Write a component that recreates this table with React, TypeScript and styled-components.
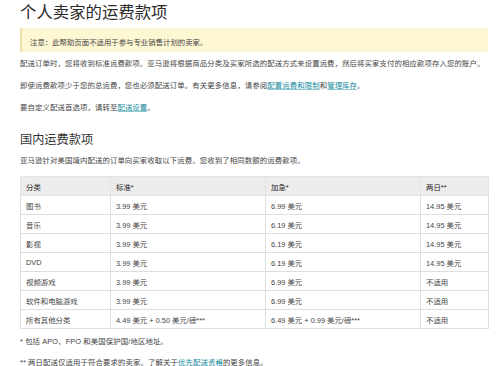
import React from "react";
import styled, { createGlobalStyle } from "styled-components";

const GlobalStyle = createGlobalStyle`
  body {
    margin: 0;
    background: #fff;
    font-family: "Liberation Sans", "Noto Sans CJK SC", sans-serif;
    color: #333;
  }
`;

const Page = styled.div`
  padding: 0 12px 0 20px;
  width: 468px;
`;

const Title = styled.h1`
  margin: 2px 0 0;
  font-size: 16.4px;
  line-height: 20px;
  font-weight: 400;
  color: #2a2a2a;
`;

const Notice = styled.div`
  margin-top: 6px;
  height: 24px;
  box-sizing: border-box;
  padding: 2px 8px 0;
  display: flex;
  align-items: center;
  background: #fef7d4;
  border-left: 2px solid #ecdfa6;
  font-size: 7.4px;
  color: #444;
`;

const Body = styled.div`
  display: flex;
  flex-direction: column;
  gap: 10px;
  margin-top: 6px;
`;

const Para = styled.p<{ $gap?: number }>`
  margin: ${(p) => p.$gap ?? 0}px 0 0;
  font-size: 7.4px;
  line-height: 12px;
  letter-spacing: 0.1px;
  color: #444;
`;

const Link = styled.a`
  color: #11899c;
  text-decoration: underline;
  text-decoration-color: #8cc9d2;
`;

const Heading = styled.h2`
  margin: 18px 0 0;
  font-size: 12.2px;
  line-height: 16px;
  font-weight: 400;
  color: #333;
`;

const Table = styled.table`
  margin-top: 9px;
  width: 468px;
  border-collapse: collapse;
  table-layout: fixed;
  font-size: 7.4px;
  color: #444;

  th,
  td {
    border: 1px solid #dedede;
    height: 19px;
    padding: 0 5px;
    text-align: left;
    font-weight: 400;
    box-sizing: border-box;
  }

  th {
    background: #ececec;
    color: #222;
    border-color: #e4e4e4;
  }
`;

const Col = styled.col<{ $w: number }>`
  width: ${(p) => p.$w}px;
`;

const rows: [string, string, string, string][] = [
  ["图书", "3.99 美元", "6.99 美元", "14.95 美元"],
  ["音乐", "3.99 美元", "6.19 美元", "14.95 美元"],
  ["影视", "3.99 美元", "6.19 美元", "14.95 美元"],
  ["DVD", "3.99 美元", "6.19 美元", "14.95 美元"],
  ["视频游戏", "3.99 美元", "6.99 美元", "不适用"],
  ["软件和电脑游戏", "3.99 美元", "6.99 美元", "不适用"],
  ["所有其他分类", "4.49 美元 + 0.50 美元/磅***", "6.49 美元 + 0.99 美元/磅***", "不适用"],
];

const App: React.FC = () => {
  return (
    <Page>
      <GlobalStyle />
      <Title>个人卖家的运费款项</Title>
      <Notice>注意：此帮助页面不适用于参与专业销售计划的卖家。</Notice>
      <Body>
        <Para>
          配送订单时，您将收到标准运费款项。亚马逊将根据商品分类及买家所选的配送方式来设置运费，然后将买家支付的相应款项存入您的账户。
        </Para>
        <Para>
          即使运费款项少于您的总运费，您也必须配送订单。有关更多信息，请参阅
          <Link>配置运费和限制</Link>和<Link>管理库存</Link>。
        </Para>
        <Para>
          要自定义配送首选项，请转至<Link>配送设置</Link>。
        </Para>
      </Body>
      <Heading>国内运费款项</Heading>
      <Para $gap={7}>
        亚马逊针对美国境内配送的订单向买家收取以下运费。您收到了相同数额的运费款项。
      </Para>
      <Table>
        <colgroup>
          <Col $w={90} />
          <Col $w={155} />
          <Col $w={155} />
          <Col $w={68} />
        </colgroup>
        <thead>
          <tr>
            <th>分类</th>
            <th>标准*</th>
            <th>加急*</th>
            <th>两日**</th>
          </tr>
        </thead>
        <tbody>
          {rows.map((r) => (
            <tr key={r[0]}>
              {r.map((c, i) => (
                <td key={i}>{c}</td>
              ))}
            </tr>
          ))}
        </tbody>
      </Table>
      <Para $gap={7}>* 包括 APO、FPO 和美国保护国/地区地址。</Para>
      <Para $gap={9}>
        ** 两日配送仅适用于符合要求的卖家。了解关于<Link>优先配送资格</Link>的更多信息。
      </Para>
    </Page>
  );
};

export default App;
